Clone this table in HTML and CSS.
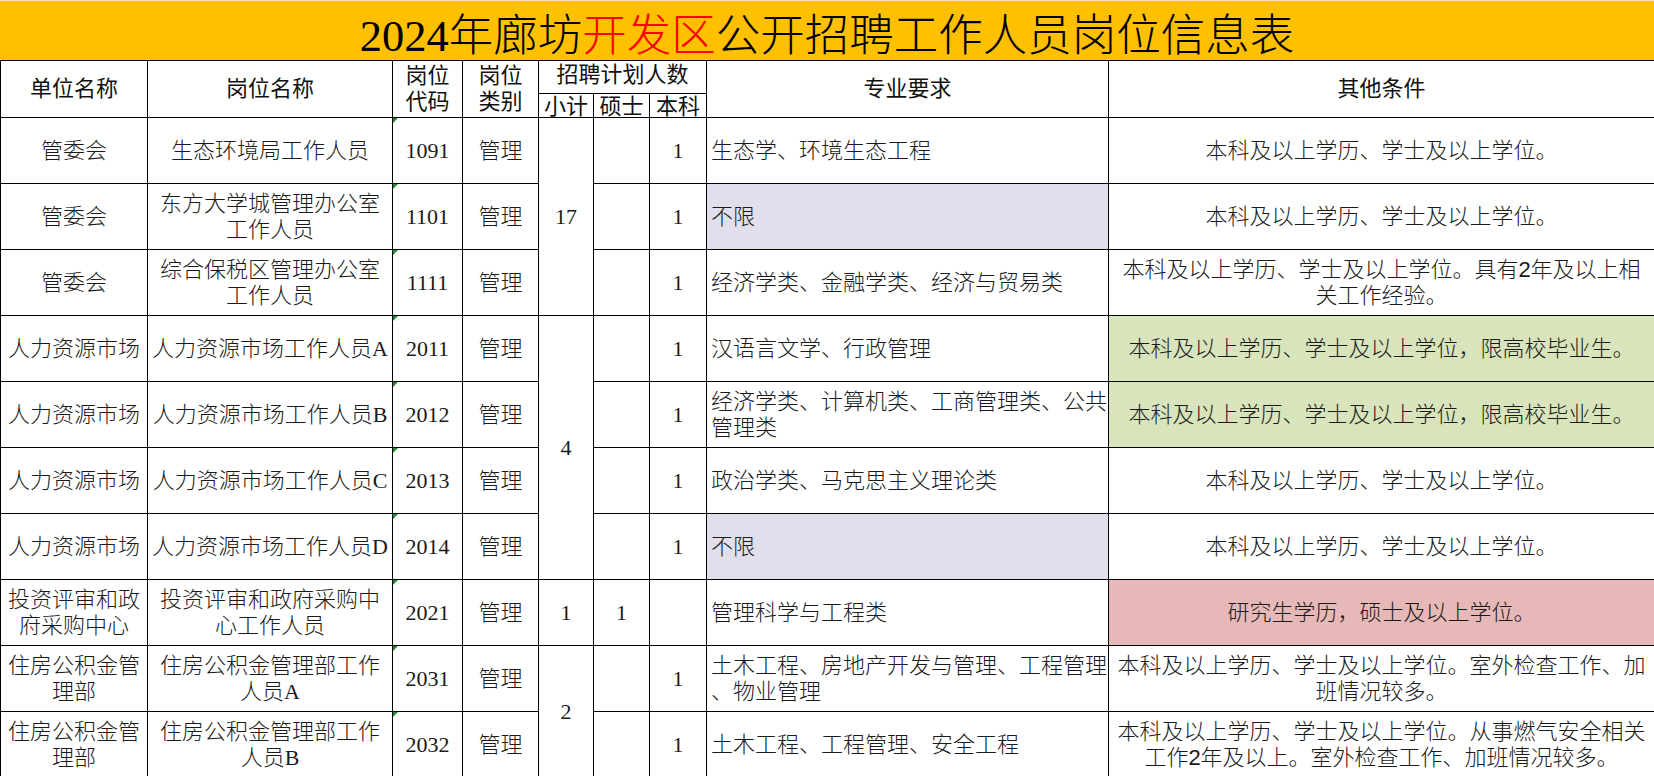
FILE: index.html
```html
<!DOCTYPE html>
<html lang="zh-CN">
<head>
<meta charset="utf-8">
<title>2024年廊坊开发区公开招聘工作人员岗位信息表</title>
<link rel="stylesheet" href="styles.css">
</head>
<body>
<div class="title">2024年廊坊<span class="red">开发区</span>公开招聘工作人员岗位信息表</div>
<table class="grid">
  <colgroup>
    <col class="c-unit"><col class="c-post"><col class="c-code"><col class="c-type">
    <col class="c-n"><col class="c-n2"><col class="c-n3"><col class="c-major"><col class="c-other">
  </colgroup>
  <thead>
    <tr class="h1">
      <th rowspan="2">单位名称</th>
      <th rowspan="2">岗位名称</th>
      <th rowspan="2" class="two">岗位<br>代码</th>
      <th rowspan="2" class="two">岗位<br>类别</th>
      <th colspan="3" class="group">招聘计划人数</th>
      <th rowspan="2">专业要求</th>
      <th rowspan="2">其他条件</th>
    </tr>
    <tr class="h2">
      <th class="sub">小计</th><th class="sub">硕士</th><th class="sub">本科</th>
    </tr>
  </thead>
  <tbody>
    <tr>
      <td>管委会</td><td>生态环境局工作人员</td><td class="code">1091</td><td>管理</td>
      <td rowspan="3">17</td><td></td><td>1</td>
      <td class="major">生态学、环境生态工程</td>
      <td class="cond">本科及以上学历、学士及以上学位。</td>
    </tr>
    <tr>
      <td>管委会</td><td>东方大学城管理办公室<br>工作人员</td><td class="code">1101</td><td>管理</td>
      <td></td><td>1</td>
      <td class="major lav">不限</td>
      <td class="cond">本科及以上学历、学士及以上学位。</td>
    </tr>
    <tr>
      <td>管委会</td><td>综合保税区管理办公室<br>工作人员</td><td class="code">1111</td><td>管理</td>
      <td></td><td>1</td>
      <td class="major">经济学类、金融学类、经济与贸易类</td>
      <td class="cond">本科及以上学历、学士及以上学位。具有2年及以上相<br>关工作经验。</td>
    </tr>
    <tr>
      <td>人力资源市场</td><td>人力资源市场工作人员A</td><td class="code">2011</td><td>管理</td>
      <td rowspan="4">4</td><td></td><td>1</td>
      <td class="major">汉语言文学、行政管理</td>
      <td class="cond green">本科及以上学历、学士及以上学位，限高校毕业生。</td>
    </tr>
    <tr>
      <td>人力资源市场</td><td>人力资源市场工作人员B</td><td class="code">2012</td><td>管理</td>
      <td></td><td>1</td>
      <td class="major">经济学类、计算机类、工商管理类、公共<br>管理类</td>
      <td class="cond green">本科及以上学历、学士及以上学位，限高校毕业生。</td>
    </tr>
    <tr>
      <td>人力资源市场</td><td>人力资源市场工作人员C</td><td class="code">2013</td><td>管理</td>
      <td></td><td>1</td>
      <td class="major">政治学类、马克思主义理论类</td>
      <td class="cond">本科及以上学历、学士及以上学位。</td>
    </tr>
    <tr>
      <td>人力资源市场</td><td>人力资源市场工作人员D</td><td class="code">2014</td><td>管理</td>
      <td></td><td>1</td>
      <td class="major lav">不限</td>
      <td class="cond">本科及以上学历、学士及以上学位。</td>
    </tr>
    <tr>
      <td>投资评审和政<br>府采购中心</td><td>投资评审和政府采购中<br>心工作人员</td><td class="code">2021</td><td>管理</td>
      <td>1</td><td>1</td><td></td>
      <td class="major">管理科学与工程类</td>
      <td class="cond pink">研究生学历，硕士及以上学位。</td>
    </tr>
    <tr>
      <td>住房公积金管<br>理部</td><td>住房公积金管理部工作<br>人员A</td><td class="code">2031</td><td>管理</td>
      <td rowspan="2">2</td><td></td><td>1</td>
      <td class="major">土木工程、房地产开发与管理、工程管理<br>、物业管理</td>
      <td class="cond">本科及以上学历、学士及以上学位。室外检查工作、加<br>班情况较多。</td>
    </tr>
    <tr>
      <td>住房公积金管<br>理部</td><td>住房公积金管理部工作<br>人员B</td><td class="code">2032</td><td>管理</td>
      <td></td><td>1</td>
      <td class="major">土木工程、工程管理、安全工程</td>
      <td class="cond">本科及以上学历、学士及以上学位。从事燃气安全相关<br>工作2年及以上。室外检查工作、加班情况较多。</td>
    </tr>
  </tbody>
</table>
</body>
</html>
```
FILE: styles.css
```css
html, body {
  margin: 0;
  padding: 0;
  background: #ffffff;
}

body {
  width: 1654px;
  overflow: hidden;
}

.title {
  box-sizing: border-box;
  height: 60px;
  padding-top: 11px;
  background: #FFC000;
  border-top: 1px solid #f1e2a6;
  text-align: center;
  font-family: "Liberation Serif", "Noto Sans CJK SC", serif;
  font-weight: 300;
  font-size: 44.5px;
  line-height: 48px;
  color: #000000;
  white-space: nowrap;
}

.title .red {
  color: #FF0000;
}

.grid {
  border-collapse: collapse;
  table-layout: fixed;
  width: 1654px;
}

.c-unit { width: 147px; }
.c-post { width: 245px; }
.c-code { width: 70px; }
.c-type { width: 76px; }
.c-n { width: 55px; }
.c-n2 { width: 56px; }
.c-n3 { width: 57px; }
.c-major { width: 402px; }
.c-other { width: 546px; }

.grid th,
.grid td {
  border: 1px solid #000000;
  padding: 0 2px;
  text-align: center;
  vertical-align: middle;
  white-space: nowrap;
}

.grid th {
  font-family: "Liberation Sans", "Noto Sans CJK SC", sans-serif;
  font-weight: 400;
  font-size: 22px;
  line-height: 24px;
  color: #111111;
}

.grid th.two {
  line-height: 26px;
}

.grid th.group {
  line-height: 22px;
  padding-bottom: 4px;
}

.grid th.sub {
  line-height: 21px;
  padding: 2px 0 0;
}

.h1 { height: 33px; }
.h2 { height: 23px; }

.grid tbody tr {
  height: 66px;
}

.grid td {
  font-family: "Liberation Serif", "Noto Sans CJK SC", serif;
  font-weight: 300;
  font-size: 22px;
  line-height: 26px;
  color: #1a1a1a;
}

.grid td.major {
  text-align: left;
  padding-left: 4px;
  padding-right: 0;
}

.grid td.cond {
  font-family: "Liberation Sans", "Noto Sans CJK SC", sans-serif;
}

.grid td.code {
  position: relative;
}

.grid td.code::before {
  content: "";
  position: absolute;
  left: 0;
  top: 0;
  width: 0;
  height: 0;
  border-top: 5px solid #1f8a2e;
  border-right: 5px solid transparent;
}

.lav { background: #E1DFEC; }
.green { background: #D8E4BC; }
.pink { background: #E6B8B7; }
```
